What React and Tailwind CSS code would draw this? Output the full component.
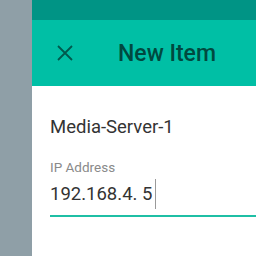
export default function App() {
  return (
    <div className="flex w-[256px] h-[256px] overflow-hidden" style={{ fontFamily: 'Roboto, sans-serif' }}>
      <div className="w-[32px] shrink-0 bg-[#8f9fa7]" />
      <div className="flex-1 flex flex-col bg-white">
        <div className="h-[20px] bg-[#009485]" />
        <div className="h-[66px] bg-[#00bfa5] flex items-center">
          <svg className="ml-[25px] w-[16px] h-[16px]" viewBox="0 0 16 16">
            <path d="M1 1 L15 15 M15 1 L1 15" stroke="#00594d" strokeWidth="1.8" fill="none" />
          </svg>
          <span className="ml-[45px] text-[23px] font-medium text-[#00493f] leading-none">New Item</span>
        </div>
        <div className="pl-[18px] flex flex-col">
          <span className="mt-[31px] text-[18.5px] leading-[20px] text-[#333333]">Media-Server-1</span>
          <span className="mt-[22px] text-[13.5px] leading-[16px] text-[#8a8a8a]">IP Address</span>
          <div className="mt-[4px] flex items-center h-[30px]">
            <span className="text-[18.5px] leading-[30px] text-[#333333]">192.168.4. 5</span>
            <span className="ml-[3px] w-px h-[30px] bg-[#9a9a9a]" />
          </div>
          <div className="mt-[6px] h-[2px] bg-[#1fbfa5]" />
        </div>
      </div>
    </div>
  );
}
